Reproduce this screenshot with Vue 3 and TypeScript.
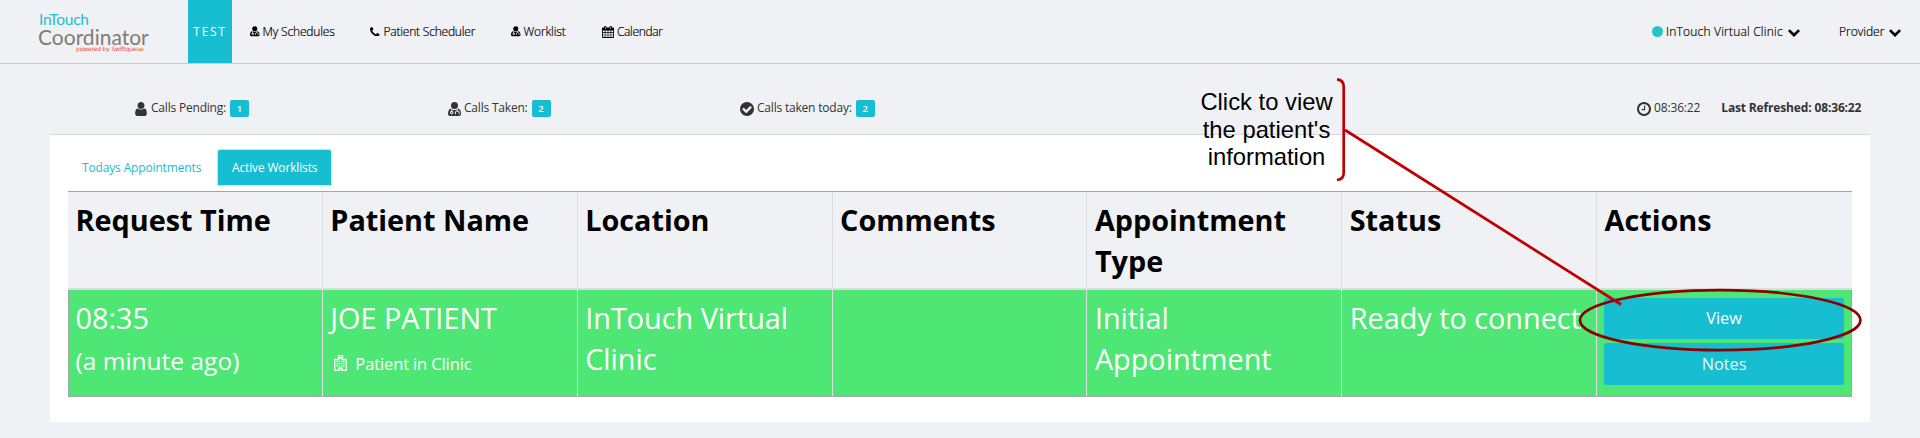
<script setup lang="ts">
import { computed } from 'vue'

interface Glyph {
  box: string
  w: number
  h: number
  path: string
}

const glyphs: Record<string, Glyph> = {
  user: {
    box: '256 128 1280 1536',
    w: 12,
    h: 14,
    path: 'M1536 1399q0 109-62.5 187t-150.5 78h-854q-88 0-150.5-78t-62.5-187q0-85 8.5-160.5t31.5-152 58.5-131 94-89 134.5-34.5q131 128 313 128t313-128q76 0 134.5 34.5t94 89 58.5 131 31.5 152 8.5 160.5zm-256-887q0 159-112.5 271.5t-271.5 112.5-271.5-112.5-112.5-271.5 112.5-271.5 271.5-112.5 271.5 112.5 112.5 271.5z',
  },
  doctor: {
    box: '0 0 13 14',
    w: 13,
    h: 14,
    path: 'M6.5 0a3.5 3.5 0 1 1 0 7a3.5 3.5 0 0 1 0-7zM3.2 6.600v2.500a1.600 1.600 0 1 0 1 0V7.400Q6.500 8.600 8.800 7.400V8.600Q7 8.900 6.900 10.700v1.600h1v-1.600q0-1.200 1.400-1.200t1.400 1.200v1.600h1v-1.600Q11.600 8.900 9.800 8.600V6.600Q13 7.200 13 12q0 2-2 2H2q-2 0-2-2Q0 7.200 3.200 6.600zM3.700 10a.7.7 0 1 1 0 1.400a.7.7 0 0 1 0-1.400z',
  },
  phone: {
    box: '192 128 1408 1408',
    w: 9,
    h: 9,
    path: 'M1600 1240q0 27-10 70.5t-21 68.5q-21 50-122 106-94 51-186 51-27 0-52.5-3.5t-57.5-12.5-47.5-14.5-55.5-20.5-49-18q-98-35-175-83-128-79-264.5-215.5t-215.5-264.5q-48-77-83-175-3-9-18-49t-20.5-55.5-14.5-47.5-12.5-57.5-3.5-52.5q0-92 51-186 56-101 106-122 25-11 68.5-21t70.5-10q14 0 21 3 18 6 53 76 11 19 30 54t35 63.5 31 53.5q3 4 17.5 25t21.5 35.5 7 28.5q0 20-28.5 50t-62 55-62 53-28.5 46q0 9 5 22.5t8.5 20.5 14 24 11.5 19q76 137 174 235t235 174q2 1 19 11.5t24 14 20.5 8.5 22.5 5q18 0 46-28.5t53-62 55-62 50-28.5q14 0 28.5 7t35.5 21.5 25 17.5q25 15 53.5 31t63.5 35 54 30q70 35 76 53 3 7 3 21z',
  },
  calendar: {
    box: '0 0 12 12',
    w: 12,
    h: 12,
    path: 'M1 1.5h1.2V.8q0-.8.8-.8h.6q.8 0 .8.8v.7h3.2V.8Q7.600 0 8.400 0H9q.8 0 .8.8v.7H11q1 0 1 1V11q0 1-1 1H1q-1 0-1-1V2.500q0-1 1-1zM.9 4.500v1.800h1.900V4.500zm2.500 0v1.800h2.300V4.500zm2.900 0v1.800h2.300V4.500zm2.900 0v1.800h1.900V4.500zM.9 6.900v1.800h1.900V6.900zm2.500 0v1.800h2.300V6.900zm2.900 0v1.800h2.300V6.900zm2.900 0v1.800h1.900V6.900zM.9 9.300v1.800h1.900V9.300zm2.500 0v1.800h2.300V9.300zm2.900 0v1.800h2.300V9.300zm2.900 0v1.800h1.900V9.300zM3 1v2h.6V1zM8.400 1v2H9V1z',
  },
  check: {
    box: '128 128 1536 1536',
    w: 14,
    h: 14,
    path: 'M1412 734q0-28-18-46l-91-90q-19-19-45-19t-45 19l-408 407-226-226q-19-19-45-19t-45 19l-91 90q-18 18-18 46 0 27 18 45l362 362q19 19 45 19 27 0 46-19l543-543q18-18 18-45zm252 162q0 209-103 385.500t-279.500 279.500-385.500 103-385.500-103-279.500-279.500-103-385.500 103-385.500 279.500-279.500 385.500-103 385.500 103 279.500 279.500 103 385.500z',
  },
  clock: {
    box: '128 128 1536 1536',
    w: 14,
    h: 14,
    path: 'M1024 544v448q0 14-9 23t-23 9h-320q-14 0-23-9t-9-23v-64q0-14 9-23t23-9h224v-352q0-14 9-23t23-9h64q14 0 23 9t9 23zm416 352q0-148-73-273t-198-198-273-73-273 73-198 198-73 273 73 273 198 198 273 73 273-73 198-198 73-273zm224 0q0 209-103 385.500t-279.500 279.500-385.500 103-385.500-103-279.500-279.500-103-385.500 103-385.500 279.500-279.500 385.500-103 385.500 103 279.500 279.500 103 385.500z',
  },
}

const navItems = [
  { icon: 'doctor', label: 'My Schedules', w: 9.5, h: 10.5, cls: 'nav-schedules' },
  { icon: 'phone', label: 'Patient Scheduler', w: 9.5, h: 9.5, cls: 'nav-scheduler' },
  { icon: 'doctor', label: 'Worklist', w: 9.5, h: 10.5, cls: 'nav-worklist' },
  { icon: 'calendar', label: 'Calendar', w: 12, h: 12, cls: 'nav-calendar' },
]

const stats = [
  { icon: 'user', label: 'Calls Pending:', count: 1, cls: 'stat-pending' },
  { icon: 'doctor', label: 'Calls Taken:', count: 2, cls: 'stat-taken' },
  { icon: 'check', label: 'Calls taken today:', count: 2, cls: 'stat-today' },
]

const columns = ['Request Time', 'Patient Name', 'Location', 'Comments', 'Appointment Type', 'Status', 'Actions']
const refreshed = '08:36:22'
const refreshedLabel = computed(() => `Last Refreshed: ${refreshed}`)
</script>

<template>
  <div class="page">
    <header class="navbar">
      <div class="logo">
        <span class="logo-top">InTouch</span>
        <span class="logo-main">Coordinator</span>
        <span class="logo-sub">powered by Swiftqueue</span>
      </div>
      <div class="env">TEST</div>
      <nav class="nav">
        <a v-for="n in navItems" :key="n.label" class="nav-item" :class="n.cls">
          <svg :width="n.w" :height="n.h" :viewBox="glyphs[n.icon].box" fill-rule="evenodd"><path :d="glyphs[n.icon].path" /></svg>
          <span class="nav-text">{{ n.label }}</span>
        </a>
      </nav>
      <div class="account">
        <a class="clinic">
          <span class="dot"></span>
          <span class="clinic-text">InTouch Virtual Clinic</span>
          <svg class="chev" width="12" height="8" viewBox="0 0 12 8"><path d="M0 2L1.800.2L6 4.300L10.200.2L12 2L6 8z" /></svg>
        </a>
        <a class="provider">
          <span class="provider-text">Provider</span>
          <svg class="chev" width="12" height="8" viewBox="0 0 12 8"><path d="M0 2L1.800.2L6 4.300L10.200.2L12 2L6 8z" /></svg>
        </a>
      </div>
    </header>

    <section class="stats">
      <div v-for="s in stats" :key="s.label" class="stat" :class="s.cls">
        <svg :width="glyphs[s.icon].w" :height="glyphs[s.icon].h" :viewBox="glyphs[s.icon].box" fill-rule="evenodd"><path :d="glyphs[s.icon].path" /></svg>
        <span class="stat-text">{{ s.label }}</span>
        <span class="badge">{{ s.count }}</span>
      </div>
      <div class="clock">
        <svg width="14" height="14" :viewBox="glyphs.clock.box"><path :d="glyphs.clock.path" /></svg>
        <span class="clock-text">{{ refreshed }}</span>
        <b class="refreshed">{{ refreshedLabel }}</b>
      </div>
    </section>

    <main class="panel">
      <div class="tabs">
        <a class="tab"><span class="tab-today">Todays Appointments</span></a>
        <a class="tab active"><span class="tab-active">Active Worklists</span></a>
      </div>
      <table class="grid">
        <thead>
          <tr><th v-for="c in columns" :key="c">{{ c }}</th></tr>
        </thead>
        <tbody>
          <tr>
            <td>08:35<div class="ago">(a minute ago)</div></td>
            <td>
              <div class="patient">JOE PATIENT</div>
              <div class="where">
                <svg class="hospital" width="13" height="16" viewBox="0 0 13 16">
                  <path d="M4.500 4.500H.7v10.800h4.300V13h3v2.300h4.300V4.500H8.500V.7h-4zM5.500 1.800v2.400M7.500 1.800v2.400M5.500 3h2" />
                  <path d="M2.500 6.500h8M2.500 8.700h8M2.500 10.900h8" stroke-dasharray="1.300 .9" />
                  <path d="M5 14h3" />
                </svg>
                <span class="where-text">Patient in Clinic</span>
              </div>
            </td>
            <td>InTouch Virtual Clinic</td>
            <td></td>
            <td>Initial Appointment</td>
            <td class="status">Ready to connect</td>
            <td class="actions">
              <button class="btn">View</button>
              <button class="btn notes">Notes</button>
            </td>
          </tr>
        </tbody>
      </table>
    </main>

    <div class="callout">Click to view<br />the patient's<br />information</div>
    <svg class="marks" width="1920" height="438" viewBox="0 0 1920 438">
      <ellipse cx="1720.200" cy="320.200" rx="140.200" ry="30" stroke="#8b0000" stroke-width="2.700" />
      <path d="M1337 79.300Q1343.700 80 1343.700 86.500V173Q1343.700 179.300 1337 180" stroke="#c00000" stroke-width="2.700" />
      <path d="M1345 130L1621 304.500" stroke="#c00000" stroke-width="2.700" />
    </svg>
  </div>
</template>

<style>
html, body { background: #f0f1f5; overflow: hidden; }
</style>

<style scoped>
.page { position: relative; width: 1920px; height: 438px; background: #f0f1f5; font-family: "Open Sans", "Noto Sans", sans-serif; font-size: 12px; color: #333; overflow: hidden; }
.page * { box-sizing: border-box; }
svg { display: block; flex: none; fill: currentColor; }
span, b { white-space: nowrap; }

.navbar { display: flex; height: 64px; border-bottom: 1px solid #c8cacf; color: #000; }
.logo { display: flex; flex-direction: column; width: 150px; margin-left: 38px; padding-top: 10px; font-family: Lato, sans-serif; flex: none; }
.logo-top { margin-left: 1px; font-size: 15.500px; line-height: 18px; letter-spacing: -0.300px; color: #1bbfd2; }
.logo-main { font-size: 21px; line-height: 18px; color: #827b75; }
.logo-sub { margin-left: 38px; font: 6px/8px "DejaVu Sans", sans-serif; letter-spacing: -0.150px; color: #ee4a42; margin-top: -1px; }
.env { width: 44px; height: 63px; background: #17bdd0; color: #fff; font-size: 12px; letter-spacing: 1.700px; line-height: 63px; text-align: center; flex: none; }
.nav { display: flex; }
.nav-item { display: flex; align-items: center; gap: 3px; font-weight: 300; letter-spacing: -0.150px; }
.nav-text, .clinic-text, .provider-text { -webkit-text-stroke: 0.200px #000; }
.nav-schedules { width: 120px; margin-left: 18px; }
.nav-scheduler { width: 141px; gap: 4px; letter-spacing: -0.200px; }
.nav-worklist { width: 91px; }
.nav-calendar { letter-spacing: -0.350px; }
.account { display: flex; margin-left: auto; }
.clinic, .provider { display: flex; align-items: center; font-weight: 300; }
.clinic { width: 187px; letter-spacing: 0.200px; }
.provider { width: 81px; }
.dot { width: 11px; height: 11px; margin-right: 3px; border-radius: 50%; background: #23c6c8; }
.chev { margin-left: 5px; margin-top: 2px; }

.stats { display: flex; height: 70px; padding-top: 35px; }
.stat, .clock { display: flex; height: 19px; align-items: center; }
.stat-text { margin: -2px 0 0 4px; letter-spacing: -0.200px; }
.stat-pending { width: 313px; margin-left: 135px; }
.stat-taken { width: 292px; }
.stat-taken .stat-text, .stat-today .stat-text { margin-left: 3px; }
.stat-today { width: 897px; }
.badge { margin-left: 4px; width: 19px; height: 17px; border-radius: 2px; background: #17bdd0; color: #fff; font-size: 9.500px; font-weight: 600; line-height: 17px; text-align: center; }
.clock-text { margin: -2px 0 0 3px; letter-spacing: -0.150px; }
.refreshed { margin: -2px 0 0 21px; letter-spacing: -0.150px; }

.panel { width: 1820px; height: 288px; margin-left: 50px; padding: 14px 18px 0; border-top: 1px solid #d5d7dc; background: #fff; }
.tabs { display: flex; height: 42px; align-items: flex-start; }
.tab { width: 149px; height: 37px; padding-left: 14px; line-height: 38px; color: #17bdd0; letter-spacing: -0.150px; }
.tab.active { width: 115px; padding-left: 14px; border: 1px solid #c3e4e8; border-radius: 3px 3px 0 0; background: #17bdd0; color: #fff; line-height: 36px; }

.grid { width: 1784px; border-collapse: separate; border-spacing: 0; table-layout: fixed; border-top: 1px solid #a5a5a9; font-size: 28.800px; line-height: 41.140px; }
th, td { padding: 7px 7px 0 7.500px; text-align: left; vertical-align: top; border-right: 1px solid #dcdde0; }
th { height: 98px; font-weight: 700; color: #000; background: #f0f1f5; border-bottom: 2px solid #dcdde0; }
td { height: 107px; background: #4ee775; color: #fff; border-bottom: 1px solid #a3a5a3; }
th:last-child { border-right: 0; }
td:first-child { border-left: 1px solid #a3a5a3; padding-left: 6.500px; }
td:last-child { border-right-color: #a3a5a3; }
.ago { padding-top: 2px; font-size: 24.500px; }
.where { display: flex; align-items: center; height: 50px; padding-left: 3.500px; font-size: 16.500px; }
.hospital { fill: none; stroke: #fff; stroke-width: 1.300px; }
.where-text { margin-left: 8.500px; letter-spacing: -0.120px; }
.status { white-space: nowrap; }
.actions { padding: 8px 7px 0; }
.btn { display: block; width: 240px; height: 41px; margin: 0 0 4px; padding: 0 0 1px; border: 0; border-radius: 2px; background: #17bdd0; color: #fff; font: 16.300px/40px "Open Sans", sans-serif; text-align: center; }
.notes { height: 42px; padding: 0; line-height: 42px; color: #e4f7fa; }

.callout { position: absolute; left: 1186.500px; top: 88px; width: 160px; font: 23.800px/27.600px "Liberation Sans", Arial, sans-serif; color: #000; text-align: center; }
.marks { position: absolute; left: 0; top: 0; fill: none; pointer-events: none; }
</style>
